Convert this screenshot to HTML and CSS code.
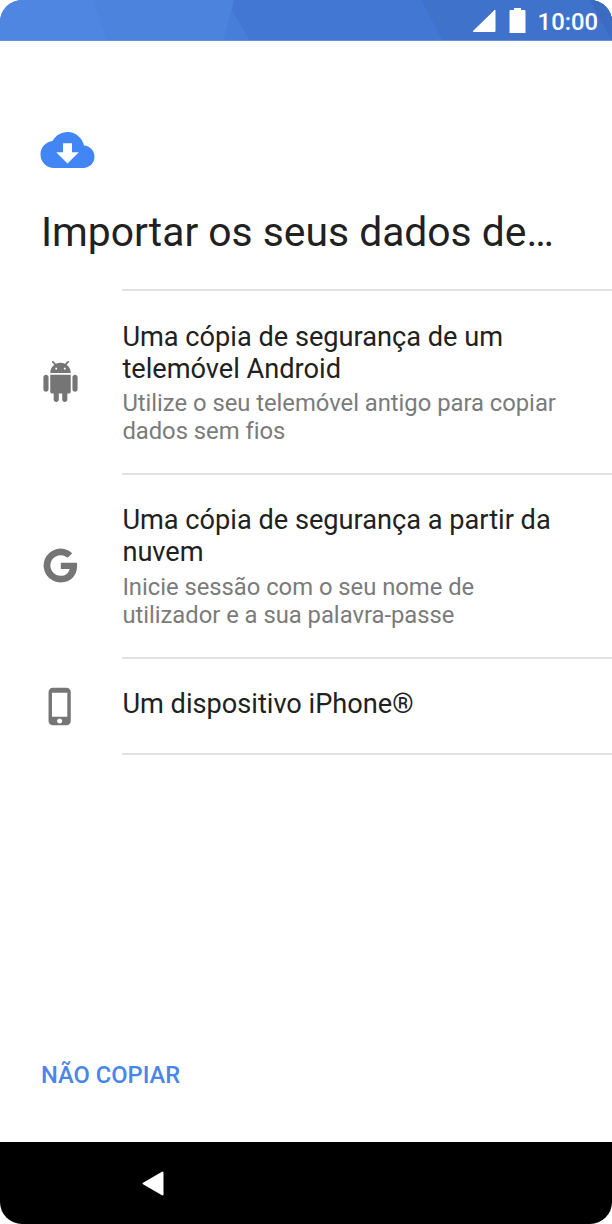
FILE: index.html
```html
<!DOCTYPE html>
<html lang="pt">
<head>
<meta charset="utf-8">
<title>Importar dados</title>
<link rel="stylesheet" href="styles.css">
</head>
<body>
<div class="phone">
  <header class="status">
    <svg class="status-bg" viewBox="0 0 612 41" preserveAspectRatio="none" aria-hidden="true">
      <rect width="612" height="41" fill="#4b83dd"/>
      <path d="M0 0H93L107 41H0z" fill="#4f86e2"/>
      <path d="M234 0H612V41H223z" fill="#477eda"/>
      <path d="M234 0H612V41H250L232 10z" fill="#4277d4"/>
      <path d="M421 0H612V41H443z" fill="#3f73cb"/>
      <path d="M590 0H612V41z" fill="#3b6cc2"/>
      <rect y="40" width="612" height="1" fill="#6690d6"/>
    </svg>
    <svg class="signal" viewBox="0 0 24 24"><path d="M23 1V22.500H1z" fill="#fff" stroke="#fff" stroke-linejoin="round"/></svg>
    <svg class="battery" viewBox="0 0 17 25"><path d="M5 0h7v2h3.500q1 0 1 1V25H.5V3q0-1 1-1H5z" fill="#fff"/></svg>
    <span class="clock">10:00</span>
  </header>
  <main class="content">
    <svg class="cloud" viewBox="0 4 24 16"><path d="M19.350 10.040C18.670 6.590 15.640 4 12 4 9.110 4 6.600 5.640 5.350 8.040 2.340 8.360 0 10.910 0 14c0 3.310 2.690 6 6 6h13c2.760 0 5-2.240 5-5 0-2.640-2.050-4.780-4.650-4.960zM17 13l-5 5-5-5h3V9h4v4h3z" fill="#4285f4"/></svg>
    <h1 class="heading">Importar os seus dados de…</h1>
    <ul class="options">
      <li class="option">
        <svg class="icon android" viewBox="0 0 24 24"><path d="M6 18c0 .55.45 1 1 1h1v3.500c0 .83.67 1.500 1.500 1.500s1.500-.67 1.500-1.500V19h2v3.500c0 .83.67 1.500 1.500 1.500s1.500-.67 1.500-1.500V19h1c.55 0 1-.45 1-1V8H6v10zM3.500 8C2.670 8 2 8.670 2 9.500v7c0 .83.67 1.500 1.500 1.500S5 17.330 5 16.500v-7C5 8.670 4.330 8 3.500 8zm17 0c-.83 0-1.500.67-1.500 1.500v7c0 .83.67 1.500 1.500 1.500s1.500-.67 1.500-1.500v-7c0-.83-.67-1.500-1.500-1.500zm-4.970-5.840l1.300-1.300c.2-.2.2-.51 0-.71-.2-.2-.51-.2-.71 0l-1.480 1.480C13.850 1.230 12.950 1 12 1c-.96 0-1.860.23-2.660.63L7.850.15c-.2-.2-.51-.2-.71 0-.2.2-.2.51 0 .71l1.310 1.310C6.970 3.260 6 5.010 6 7h12c0-1.990-.97-3.750-2.470-4.840zM10 5H9V4h1v1zm5 0h-1V4h1v1z"/></svg>
        <div class="text">
          <div class="title">Uma cópia de segurança de um<br>telemóvel Android</div>
          <div class="sub">Utilize o seu telemóvel antigo para copiar<br>dados sem fios</div>
        </div>
      </li>
      <li class="option">
        <svg class="icon google" viewBox="0 0 24 24"><path d="M12.200 10.200v4h5.700c-.5 2.600-2.700 4.500-5.700 4.500a6.700 6.700 0 1 1 4.400-11.700l3-3A11 11 0 1 0 12.200 23C18.600 23 22.800 18.500 22.800 12.200q0-1-.2-2z"/></svg>
        <div class="text">
          <div class="title">Uma cópia de segurança a partir da<br>nuvem</div>
          <div class="sub">Inicie sessão com o seu nome de<br>utilizador e a sua palavra-passe</div>
        </div>
      </li>
      <li class="option short">
        <svg class="icon iphone" viewBox="0 0 24 24"><path d="M15.500 1h-8A2.500 2.500 0 0 0 5 3.500v17A2.500 2.500 0 0 0 7.500 23h8a2.500 2.500 0 0 0 2.500-2.500v-17A2.500 2.500 0 0 0 15.500 1zm-4 21c-.83 0-1.500-.67-1.500-1.500s.67-1.500 1.500-1.500 1.500.67 1.500 1.500-.67 1.500-1.500 1.500zm4.500-4H7V4h9v14z"/></svg>
        <div class="text">
          <div class="title">Um dispositivo iPhone®</div>
        </div>
      </li>
    </ul>
    <button class="skip">NÃO COPIAR</button>
  </main>
  <nav class="navbar">
    <svg class="back" viewBox="0 0 22 25"><path d="M20.500 1.500v22L1.500 12.500z" fill="#fff" stroke="#fff" stroke-width="2" stroke-linejoin="round"/></svg>
  </nav>
</div>
</body>
</html>
```
FILE: styles.css
```css
* { box-sizing: border-box; }
body { margin: 0; background: #fff; font-family: Roboto, sans-serif; color: #212121; }
.phone { width: 612px; height: 1224px; display: flex; flex-direction: column; overflow: hidden; border-radius: 22px; background: #fff; }
.status { position: relative; height: 41px; flex: none; display: flex; justify-content: flex-end; padding: 8px 14px 0 0; }
.status-bg { position: absolute; inset: 0; width: 100%; height: 100%; }
.signal { position: relative; width: 24px; height: 24px; margin: 1px 13px 0 0; }
.battery { position: relative; width: 17px; height: 25px; margin-right: 12px; }
.clock { position: relative; color: #fff; font-size: 23.800px; font-weight: 500; line-height: 28px; }
.content { flex: 1; display: flex; flex-direction: column; align-items: flex-start; padding-top: 91px; }
.cloud { width: 55px; height: 36px; margin-left: 40px; }
.heading { margin: 40px 0 0 41px; font-size: 40.800px; font-weight: 400; line-height: 48px; white-space: nowrap; }
.options { list-style: none; margin: 33.400px 0 0; padding: 0; width: 100%; }
.option { display: grid; grid-template-columns: 122px 1fr; align-items: center; height: 183.600px; }
.option.short { height: 98px; }
.text { align-self: stretch; border-top: 2px solid #e1e1e1; padding-top: 29.500px; white-space: nowrap; }
.short .text { border-bottom: 2px solid #e1e1e1; }
.title { font-size: 27.200px; line-height: 32px; padding-left: .4px; letter-spacing: -.01px; }
.sub { margin-top: 4.500px; font-size: 23.800px; line-height: 28px; color: #7b7b7b; padding-left: .4px; letter-spacing: -.02px; font-variant-ligatures: common-ligatures; }
.icon { width: 41px; height: 41px; margin-left: 40px; margin-top: 1px; fill: #757575; }
.google { width: 37px; height: 37px; margin-left: 42px; }
.skip { margin: auto 0 53px 41px; padding: 0; border: 0; background: none; color: #4a86e8; font: 500 23.700px/28px Roboto, sans-serif; }
.navbar { flex: none; height: 82px; background: #000; padding: 29px 0 0 142px; }
.back { display: block; width: 22px; height: 25px; }
```
